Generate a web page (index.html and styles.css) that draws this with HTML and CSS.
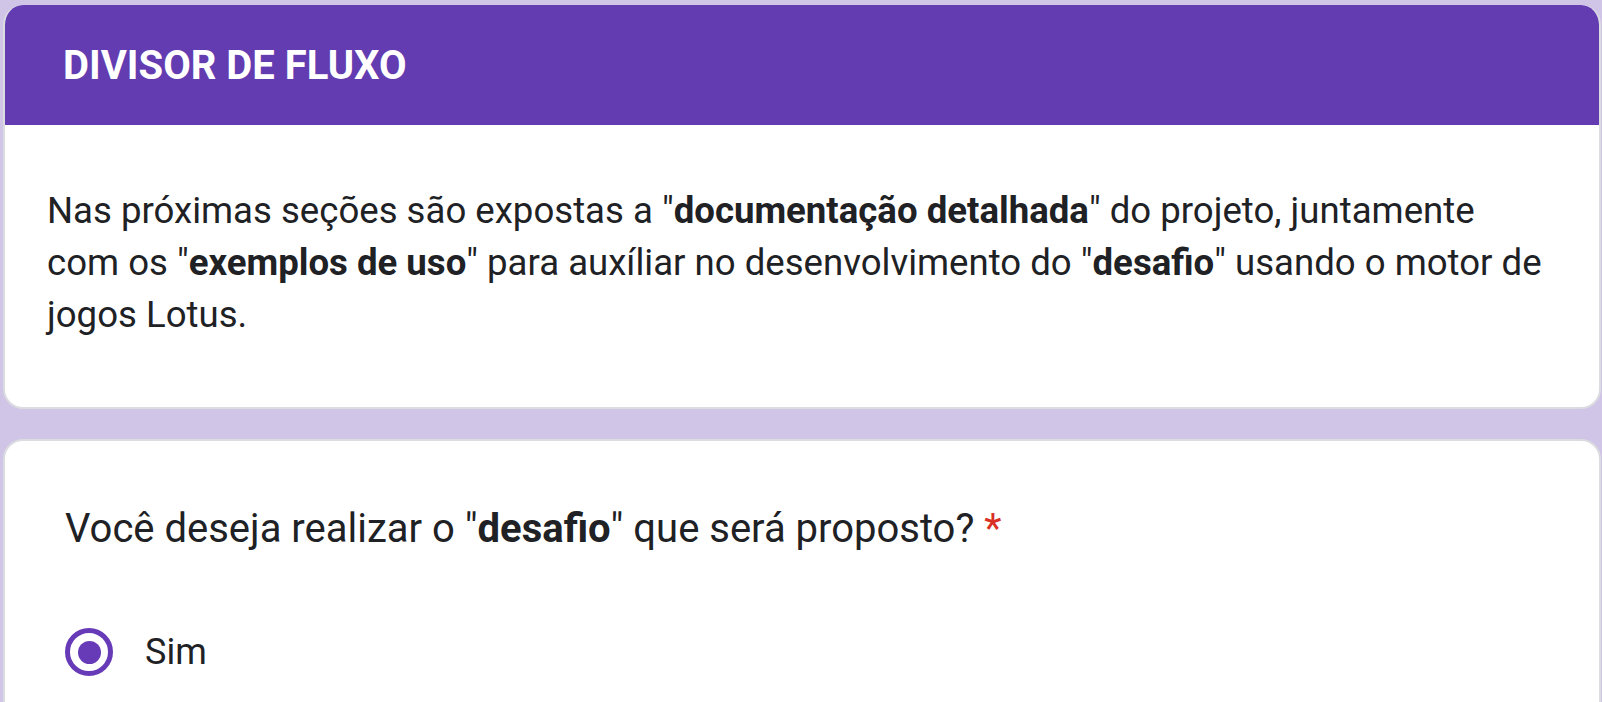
FILE: index.html
```html
<!DOCTYPE html>
<html lang="pt">
<head>
<meta charset="utf-8">
<title>Divisor de fluxo</title>
<link rel="stylesheet" href="styles.css">
</head>
<body>
<main class="page">
  <section class="card card-section">
    <header class="section-head">
      <h1 class="section-title">DIVISOR DE FLUXO</h1>
    </header>
    <div class="section-body">
      <p class="description">Nas próximas seções são expostas a "<b>documentação detalhada</b>" do projeto, juntamente<br>com os "<b>exemplos de uso</b>" para auxíliar no desenvolvimento do "<b>desafio</b>" usando o motor de<br>jogos Lotus.</p>
    </div>
  </section>
  <section class="card card-question">
    <div class="question">Você deseja realizar o "<b>desafio</b>" que será proposto? <span class="required">*</span></div>
    <label class="option">
      <span class="radio"><span class="radio-dot"></span></span>
      <span class="option-label">Sim</span>
    </label>
  </section>
</main>
</body>
</html>
```

FILE: styles.css
```css
html, body {
  margin: 0;
  padding: 0;
  background: #d1c5e7;
  height: 100%;
  overflow: hidden;
}

body {
  font-family: Roboto, "Liberation Sans", Arial, sans-serif;
  color: #202124;
}

.page {
  display: flex;
  flex-direction: column;
  gap: 30px;
  padding: 5px 1px 0 3px;
}

.card {
  background: #ffffff;
  border: 2px solid #dadce0;
  border-radius: 20px;
  overflow: hidden;
}

.card-section {
  border-top: none;
}

.section-head {
  background: #623cb0;
  height: 120px;
  display: flex;
  align-items: center;
  padding: 0 60px;
  margin: 0 -2px;
}

.section-title {
  margin: 0;
  color: #ffffff;
  font-weight: 700;
  font-size: 40px;
  letter-spacing: 0;
}

.section-body {
  padding: 60px 42px 66px 42px;
}

.description {
  margin: 0;
  font-size: 36.6px;
  line-height: 52px;
  color: #202124;
}

.description b {
  font-weight: 700;
}

.card-question {
  padding: 63px 60px 80px 60px;
}

.question {
  font-size: 40px;
  line-height: 50px;
  color: #202124;
}

.required {
  color: #d93025;
}

.option {
  display: flex;
  align-items: center;
  gap: 32px;
  margin-top: 74px;
}

.radio {
  box-sizing: border-box;
  width: 48px;
  height: 48px;
  border: 5px solid #673ab7;
  border-radius: 50%;
  display: flex;
  align-items: center;
  justify-content: center;
  flex: none;
}

.radio-dot {
  width: 23px;
  height: 23px;
  border-radius: 50%;
  background: #673ab7;
}

.option-label {
  font-size: 36px;
  line-height: 48px;
}
```
